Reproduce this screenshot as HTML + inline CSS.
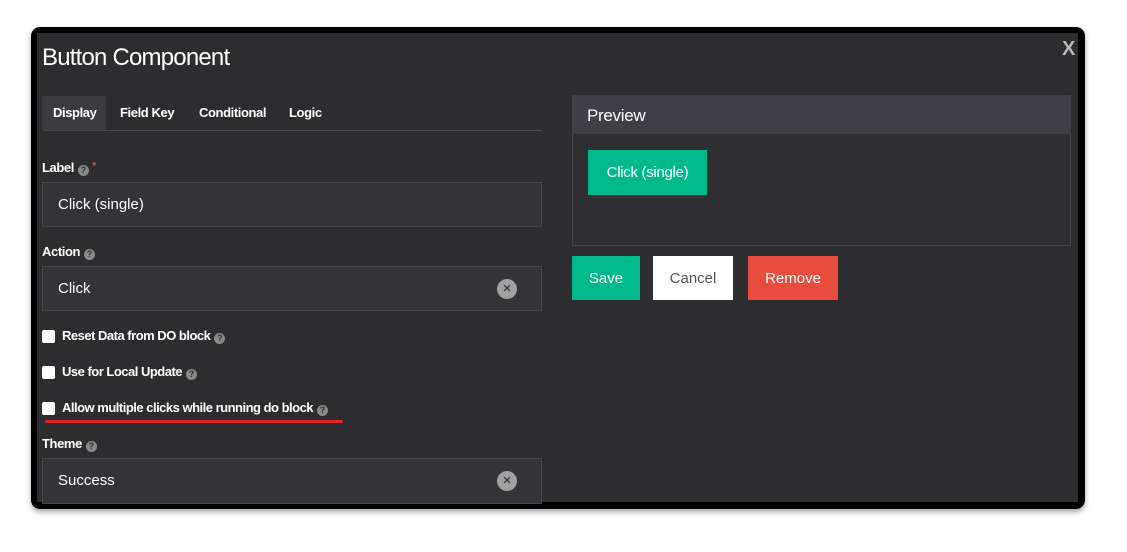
<!DOCTYPE html>
<html><head><style>
body{margin:0;width:1127px;height:552px;background:#fff;font-family:"Liberation Sans",sans-serif;position:relative;overflow:hidden}
.frame{position:absolute;left:31px;top:27px;width:1054px;height:482px;background:#000;border-radius:9px;box-shadow:0 3px 6px rgba(0,0,0,.35)}
.inner{position:absolute;left:37px;top:33px;width:1041px;height:469px;background:#2d2d30;overflow:hidden}
.a{position:absolute}
.t{color:#fff}
.tab{position:absolute;top:105px;color:#fff;font-size:13px;font-weight:bold;letter-spacing:-.4px}
.lbl{position:absolute;left:42px;color:#fff;font-weight:bold;font-size:13px;letter-spacing:-.4px}
.q{display:inline-block;width:11px;height:11px;border-radius:50%;background:#8a8a8a;color:#2d2d30;font-size:9px;line-height:11px;text-align:center;font-weight:bold;vertical-align:-1px;margin-left:4px;letter-spacing:0}
.inp{position:absolute;left:42px;width:498px;height:43px;background:#333338;border:1px solid #45454a;color:#fff;font-size:15px;line-height:44px;text-indent:15px;box-sizing:content-box}
.clr{position:absolute;right:24px;top:12px;width:20px;height:20px;border-radius:50%;background:#a0a0a0;color:#222;font-size:15px;line-height:20px;text-align:center;text-indent:0}
.cb{position:absolute;left:42px;width:13px;height:13px;background:#fff;border-radius:2px}
.ct{position:absolute;left:62px;color:#fff;font-size:13px;font-weight:bold;letter-spacing:-.5px}
.btn{position:absolute;top:256px;height:44px;line-height:45px;text-align:center;font-size:15px;color:#fff}
</style></head><body>
<div class="frame"></div>
<div class="inner"></div>
<div class="a t" style="left:42px;top:44px;font-size:24px;letter-spacing:-.8px">Button Component</div>
<div class="a" style="left:1062px;top:38px;color:#bbb;font-size:20px;font-weight:bold">X</div>
<div class="a" style="left:42px;top:96px;width:64px;height:34px;background:#3a3a3f"></div>
<div class="a" style="left:42px;top:130px;width:500px;height:1px;background:#48484d"></div>
<div class="tab" style="left:53px">Display</div>
<div class="tab" style="left:120px">Field Key</div>
<div class="tab" style="left:199px">Conditional</div>
<div class="tab" style="left:289px">Logic</div>
<div class="lbl" style="top:160px">Label<span class="q">?</span> <span style="color:#e84c3d;font-size:10px;vertical-align:3px">*</span></div>
<div class="inp" style="top:182px">Click (single)</div>
<div class="lbl" style="top:244px">Action<span class="q">?</span></div>
<div class="inp" style="top:266px;line-height:43px">Click<div class="clr">×</div></div>
<div class="cb" style="top:330px"></div><div class="ct" style="top:328px">Reset Data from DO block<span class="q">?</span></div>
<div class="cb" style="top:366px"></div><div class="ct" style="top:364px">Use for Local Update<span class="q">?</span></div>
<div class="cb" style="top:402px"></div><div class="ct" style="top:400px">Allow multiple clicks while running do block<span class="q">?</span></div>
<div class="a" style="left:45px;top:420px;width:298px;height:3px;background:#e3242b;border-radius:2px"></div>
<div class="lbl" style="top:436px">Theme<span class="q">?</span></div>
<div class="inp" style="top:458px;height:44px;line-height:44px">Success<div class="clr">×</div></div>
<div class="a" style="left:572px;top:95px;width:497px;height:149px;border:1px solid #45454a;background:#2f2f32"></div>
<div class="a" style="left:572px;top:95px;width:499px;height:39px;background:#3f3f45"></div>
<div class="a t" style="left:587px;top:106px;font-size:17px;letter-spacing:-.3px">Preview</div>
<div class="a" style="left:588px;top:150px;width:119px;height:45px;background:#00b98a;color:#fff;font-size:15px;line-height:46px;text-align:center;letter-spacing:-.3px">Click (single)</div>
<div class="btn" style="left:572px;width:68px;background:#00b98a">Save</div>
<div class="btn" style="left:653px;width:80px;background:#fff;color:#555">Cancel</div>
<div class="btn" style="left:748px;width:90px;background:#e74c3c">Remove</div>
</body></html>
